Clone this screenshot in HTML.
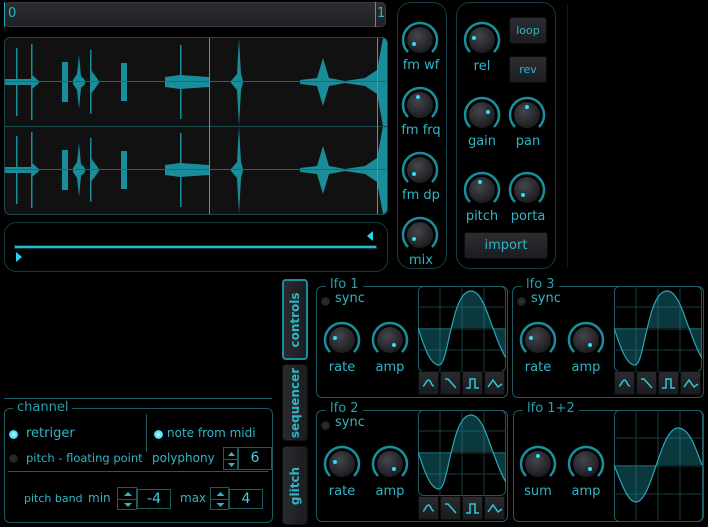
<!DOCTYPE html>
<html><head><meta charset="utf-8"><style>
*{margin:0;padding:0;box-sizing:border-box}
body{width:708px;height:527px;background:#000;position:relative;overflow:hidden;font-family:"DejaVu Sans","Liberation Sans",sans-serif;color:#2fb6c6;font-size:13px}
.a{position:absolute}
.pnl{position:absolute;border:1px solid #123e44;border-radius:14px}
.lbl{position:absolute;width:60px;text-align:center;font-size:13px}
.btn{position:absolute;background:linear-gradient(#2c2d31,#1c1d20);border:1px solid #0d0d0f;border-radius:3px;text-align:center;color:#2fb6c6;font-size:11px}
.box{position:absolute;border:1px solid #1d5a62;border-radius:6px}
.ttl{position:absolute;background:#000;padding:0 4px;font-size:13px;color:#2a9fae}
.led{position:absolute;width:9px;height:9px;border-radius:50%;background:radial-gradient(#333,#151515)}
.led.on{background:radial-gradient(#bff,#4cd8ee 60%,#188)}
.tab{position:absolute;left:282px;width:26px;background:linear-gradient(90deg,#2a2b2f,#1b1c1f);border-radius:4px;border:1px solid #111}
.tab span{position:absolute;left:50%;top:50%;transform:translate(-50%,-50%) rotate(-90deg);white-space:nowrap;font-size:12px;font-weight:bold;color:#2fb6c6}
.wb{position:absolute;top:0;width:21px;height:24px;background:linear-gradient(#2a2b2f,#1a1b1e);border:1px solid #0c0c0c}
.num{position:absolute;border:1px solid #1d5a62;background:#000;text-align:center;color:#3cd0e4;font-size:14px}
.spin{position:absolute;border:1px solid #1d5a62;background:#000}
.ch{font-size:12px}
</style></head><body>
<svg width="0" height="0" style="position:absolute"><defs>
<radialGradient id="kb" cx="40%" cy="35%" r="70%"><stop offset="0" stop-color="#44464c"/><stop offset="1" stop-color="#18191c"/></radialGradient>
<g id="knob"><path d="M8 32 A17 17 0 1 1 32 32" fill="none" stroke="#1a8f9c" stroke-width="2.5"/><circle cx="20" cy="20" r="13" fill="url(#kb)"/></g>
</defs></svg>

<div class="a" style="left:4px;top:2px;width:382px;height:25px;background:linear-gradient(#2c2d31,#1f2023);border:1px solid #3a3b3f;border-radius:5px"></div>
<div class="a" style="left:4px;top:2px;width:1px;height:25px;background:#2ab"></div>
<div class="a" style="left:375px;top:2px;width:1px;height:25px;background:#2ab"></div>
<div class="a" style="left:8px;top:6px;font-size:13px">0</div>
<div class="a" style="left:377px;top:6px;font-size:13px">1</div>

<div class="a" style="left:4px;top:37px;width:384px;height:178px;background:#111;border:1px solid #1d4a50;border-radius:6px;overflow:hidden">
<svg width="384" height="178" style="position:absolute;left:0;top:0">
<defs><g id="wv" fill="#1a8d9a">
<rect x="0" y="-3" width="30" height="6"/><rect x="11" y="-34" width="1.5" height="68"/><rect x="26" y="-38" width="1.5" height="76"/><path d="M26 -8 L34 -1 L34 1 L26 8Z"/>
<rect x="57" y="-20" width="6" height="40"/>
<path d="M68 -2 L72 -8 L74 -27 L76 -6 L80 -2 L80 2 L76 6 L74 27 L72 8 L68 2Z"/>
<rect x="85" y="-32" width="1.5" height="64"/><path d="M86 -12 L94 -1 L94 1 L86 12Z"/>
<rect x="116" y="-19" width="6" height="38"/>
<path d="M160 -5 L175 -7 L204 -5 L204 5 L175 7 L160 5Z"/><rect x="175" y="-37" width="1.5" height="74"/>
<path d="M226 -1 L232 -8 L234 -44 L236 -8 L238 -1 L238 1 L236 8 L234 44 L232 8 L226 1Z"/>
<path d="M295 -2 L312 -4 L318 -24 L324 -4 L340 -1 L360 -4 L372 -12 L378 -44 L383 -44 L383 44 L378 44 L372 12 L360 4 L340 1 L324 4 L318 24 L312 4 L295 2Z"/>
</g></defs>
<use href="#wv" transform="translate(0,44)"/>
<use href="#wv" transform="translate(0,132)"/>
<rect x="0" y="43" width="384" height="1" fill="#1f6a72"/>
<rect x="0" y="131" width="384" height="1" fill="#1f6a72"/>
<rect x="0" y="88" width="384" height="1" fill="#1e4a50"/>
<rect x="204" y="0" width="1" height="178" fill="#2aa8b8"/>
<rect x="372" y="0" width="1" height="178" fill="#2aa8b8"/>
</svg></div>

<div class="a" style="left:4px;top:222px;width:384px;height:50px;border:1px solid #143a3f;border-radius:12px"></div>
<div class="a" style="left:14px;top:245px;width:363px;height:4px;background:#2ab8cc;border:1px solid #0f3f45"></div>
<svg class="a" style="left:0;top:0" width="390" height="270"><path d="M16 252 L22 257 L16 262Z M373 231 L367 236 L373 241Z" fill="#26d4f0"/></svg>

<div class="pnl" style="left:397px;top:2px;width:50px;height:267px"></div>
<div class="pnl" style="left:456px;top:2px;width:100px;height:267px"></div>
<div class="a" style="left:567px;top:5px;width:1px;height:262px;background:#1a1a1a"></div>

<svg class="a" style="left:0;top:0" width="708" height="527">
<use href="#knob" x="400" y="20"/><circle cx="414" cy="44" r="2" fill="#2ee0f8"/>
<use href="#knob" x="400" y="85"/><circle cx="418" cy="97" r="2" fill="#2ee0f8"/>
<use href="#knob" x="400" y="150"/><circle cx="414" cy="174" r="2" fill="#2ee0f8"/>
<use href="#knob" x="400" y="215"/><circle cx="414" cy="239" r="2" fill="#2ee0f8"/>
<use href="#knob" x="462" y="20"/><circle cx="474" cy="38" r="2" fill="#2ee0f8"/>
<use href="#knob" x="462" y="95"/><circle cx="488" cy="112" r="2" fill="#2ee0f8"/>
<use href="#knob" x="507" y="95"/><circle cx="527" cy="107" r="2" fill="#2ee0f8"/>
<use href="#knob" x="462" y="170"/><circle cx="480" cy="182" r="2" fill="#2ee0f8"/>
<use href="#knob" x="507" y="170"/><circle cx="523" cy="195" r="2" fill="#2ee0f8"/>
<use href="#knob" x="322" y="320"/><circle cx="335" cy="338" r="2" fill="#2ee0f8"/>
<use href="#knob" x="370" y="320"/><circle cx="394" cy="345" r="2" fill="#2ee0f8"/>
<use href="#knob" x="518" y="320"/><circle cx="531" cy="338" r="2" fill="#2ee0f8"/>
<use href="#knob" x="566" y="320"/><circle cx="590" cy="345" r="2" fill="#2ee0f8"/>
<use href="#knob" x="322" y="444"/><circle cx="335" cy="462" r="2" fill="#2ee0f8"/>
<use href="#knob" x="370" y="444"/><circle cx="394" cy="469" r="2" fill="#2ee0f8"/>
<use href="#knob" x="518" y="444"/><circle cx="538" cy="456" r="2" fill="#2ee0f8"/>
<use href="#knob" x="566" y="444"/><circle cx="590" cy="469" r="2" fill="#2ee0f8"/>
</svg>

<div class="lbl" style="left:391px;top:58px">fm wf</div>
<div class="lbl" style="left:391px;top:123px">fm frq</div>
<div class="lbl" style="left:391px;top:188px">fm dp</div>
<div class="lbl" style="left:391px;top:253px">mix</div>
<div class="lbl" style="left:452px;top:59px">rel</div>
<div class="lbl" style="left:452px;top:134px">gain</div>
<div class="lbl" style="left:498px;top:134px">pan</div>
<div class="lbl" style="left:452px;top:209px">pitch</div>
<div class="lbl" style="left:498px;top:209px">porta</div>
<div class="btn" style="left:509px;top:17px;width:38px;height:27px;line-height:25px">loop</div>
<div class="btn" style="left:509px;top:56px;width:38px;height:27px;line-height:25px">rev</div>
<div class="btn" style="left:464px;top:232px;width:84px;height:27px;line-height:25px;font-size:13px">import</div>

<div class="tab" style="top:279px;height:81px;border:2px solid #1a8f9c"><span>controls</span></div>
<div class="tab" style="top:364px;height:77px"><span>sequencer</span></div>
<div class="tab" style="top:446px;height:79px"><span>glitch</span></div>

<div class="box" style="left:316px;top:286px;width:192px;height:112px"></div>
<div class="ttl" style="left:326px;top:277px">lfo 1</div>
<div class="box" style="left:512px;top:286px;width:192px;height:112px"></div>
<div class="ttl" style="left:522px;top:277px">lfo 3</div>
<div class="box" style="left:316px;top:410px;width:192px;height:112px"></div>
<div class="ttl" style="left:326px;top:401px">lfo 2</div>
<div class="box" style="left:513px;top:410px;width:191px;height:112px"></div>
<div class="ttl" style="left:523px;top:401px">lfo 1+2</div>

<div class="led" style="left:321px;top:297px"></div><div class="a" style="left:335px;top:291px">sync</div>
<div class="led" style="left:517px;top:297px"></div><div class="a" style="left:531px;top:291px">sync</div>
<div class="led" style="left:321px;top:421px"></div><div class="a" style="left:335px;top:415px">sync</div>

<div class="lbl" style="left:312px;top:360px">rate</div><div class="lbl" style="left:360px;top:360px">amp</div>
<div class="lbl" style="left:508px;top:360px">rate</div><div class="lbl" style="left:556px;top:360px">amp</div>
<div class="lbl" style="left:312px;top:484px">rate</div><div class="lbl" style="left:360px;top:484px">amp</div>
<div class="lbl" style="left:508px;top:484px">sum</div><div class="lbl" style="left:556px;top:484px">amp</div>

<svg width="0" height="0" style="position:absolute"><defs>
<g id="gr">
<rect x="0.5" y="0.5" width="87" height="85" rx="5" fill="#000" stroke="#1d5a62"/>
<path d="M22 0V86M44 0V86M66 0V86M0 21H88M0 43H88M0 64H88" stroke="#163c40"/>
<path d="M0 42 C6 60 12 79 21 79 C31 79 33 5 53 5 C64 5 70 30 75 42 C80 56 84 66 88 72 L88 42Z" fill="rgba(30,160,175,0.35)"/>
<path d="M0 42 C6 60 12 79 21 79 C31 79 33 5 53 5 C64 5 70 30 75 42 C80 56 84 66 88 72" fill="none" stroke="#2aa6b4" stroke-width="1.2"/>
</g></defs></svg>
<svg class="a" style="left:418px;top:286px" width="88" height="86"><use href="#gr"/></svg>
<svg class="a" style="left:614px;top:286px" width="88" height="86"><use href="#gr"/></svg>
<svg class="a" style="left:418px;top:410px" width="88" height="86"><use href="#gr"/></svg>
<svg class="a" style="left:614px;top:410px" width="89" height="112">
<rect x="0.5" y="0.5" width="88" height="111" rx="5" fill="#000" stroke="#1d5a62"/>
<path d="M22 0V112M44 0V112M66 0V112M0 28H89M0 56H89M0 84H89" stroke="#163c40"/>
<path d="M0 55 C8 75 14 92 22 92 C38 92 46 18 64 18 C76 18 82 40 88 55Z" fill="rgba(30,160,175,0.35)"/>
<path d="M0 55 C8 75 14 92 22 92 C38 92 46 18 64 18 C76 18 82 40 88 55" fill="none" stroke="#2aa6b4" stroke-width="1.2"/>
</svg>

<svg width="0" height="0" style="position:absolute"><defs><g id="wi" fill="none" stroke="#2fc8dc" stroke-width="1.5"><path d="M5 15 C7 15 8 9 10.5 9 C13 9 13 15 16 15"/><path d="M27 8 H30 L38 17"/><path d="M48 17 H52 V8 H57 V17 H61"/><path d="M70 16 L75 9 L80 16 L84 13"/></g></defs></svg>
<div class="a" style="left:418px;top:371px;width:88px;height:25px">
<div class="wb" style="left:0"></div><div class="wb" style="left:22px"></div><div class="wb" style="left:44px"></div><div class="wb" style="left:66px"></div>
<svg class="a" width="88" height="25" style="left:0;top:0"><use href="#wi"/></svg></div>
<div class="a" style="left:614px;top:371px;width:88px;height:25px">
<div class="wb" style="left:0"></div><div class="wb" style="left:22px"></div><div class="wb" style="left:44px"></div><div class="wb" style="left:66px"></div>
<svg class="a" width="88" height="25" style="left:0;top:0"><use href="#wi"/></svg></div>
<div class="a" style="left:418px;top:496px;width:88px;height:25px">
<div class="wb" style="left:0"></div><div class="wb" style="left:22px"></div><div class="wb" style="left:44px"></div><div class="wb" style="left:66px"></div>
<svg class="a" width="88" height="25" style="left:0;top:0"><use href="#wi"/></svg></div>

<div class="a" style="left:4px;top:398px;width:268px;height:1px;background:#1d5a62"></div>
<div class="box" style="left:4px;top:408px;width:269px;height:115px"></div>
<div class="ttl" style="left:13px;top:400px">channel</div>
<div class="led on" style="left:9px;top:430px"></div><div class="a ch" style="left:26px;top:426px;font-size:13px">retriger</div>
<div class="a" style="left:146px;top:414px;width:1px;height:38px;background:#1d5a62"></div>
<div class="led on" style="left:154px;top:430px"></div><div class="a ch" style="left:167px;top:426px">note from midi</div>
<div class="led" style="left:9px;top:454px"></div><div class="a ch" style="left:26px;top:451px;font-size:11.5px">pitch - floating point</div>
<div class="a ch" style="left:152px;top:451px">polyphony</div>
<div class="spin" style="left:223px;top:447px;width:15px;height:23px"><svg width="15" height="23"><path d="M0 11.5H15" stroke="#1d5a62"/><path d="M4 8 L7.5 4 L11 8Z M4 15 L7.5 19 L11 15Z" fill="#2fb6c6"/></svg></div>
<div class="num" style="left:238px;top:447px;width:34px;height:23px;line-height:21px">6</div>
<div class="a" style="left:8px;top:471px;width:260px;height:1px;background:#1d5a62"></div>
<div class="a" style="left:24px;top:492px;font-size:11px">pitch band</div>
<div class="a ch" style="left:88px;top:491px">min</div>
<div class="spin" style="left:117px;top:487px;width:20px;height:23px"><svg width="20" height="23"><path d="M0 11.5H20" stroke="#1d5a62"/><path d="M6 8 L10 4 L14 8Z M6 15 L10 19 L14 15Z" fill="#2fb6c6"/></svg></div>
<div class="num" style="left:137px;top:489px;width:34px;height:20px;line-height:18px">-4</div>
<div class="a ch" style="left:180px;top:491px">max</div>
<div class="spin" style="left:210px;top:487px;width:19px;height:23px"><svg width="19" height="23"><path d="M0 11.5H19" stroke="#1d5a62"/><path d="M5.5 8 L9.5 4 L13.5 8Z M5.5 15 L9.5 19 L13.5 15Z" fill="#2fb6c6"/></svg></div>
<div class="num" style="left:229px;top:489px;width:34px;height:20px;line-height:18px">4</div>
</body></html>
